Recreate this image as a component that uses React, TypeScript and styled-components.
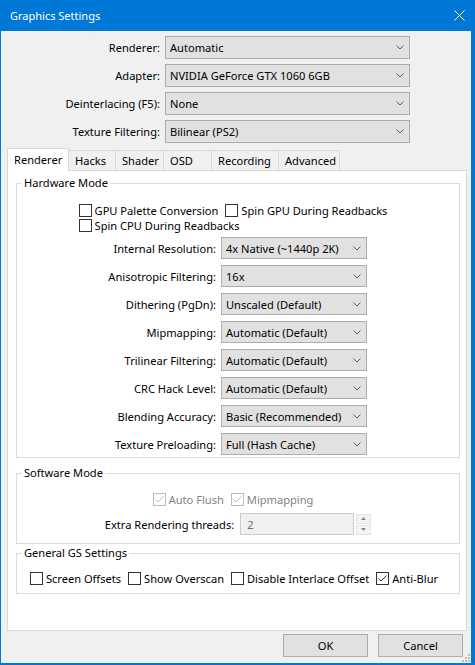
import React from 'react';
import styled, { createGlobalStyle } from 'styled-components';

const GlobalStyle = createGlobalStyle`
  html, body {
    margin: 0;
    padding: 0;
    background: #ffffff;
  }
  body {
    font-family: 'Noto Sans', 'Open Sans', sans-serif;
    font-size: 11.1px;
    color: #000;
  }
`;

const Window = styled.div`
  width: 475px;
  height: 665px;
  box-sizing: border-box;
  background: #0078d7;
  padding: 0 4px 2px 1px;
  display: flex;
  flex-direction: column;
`;

const TitleBar = styled.div`
  height: 31px;
  flex: none;
  display: flex;
  align-items: center;
  justify-content: space-between;
  padding: 0 6px 0 9px;
  color: #fff;
  font-size: 11px;
`;

const Client = styled.div`
  flex: 1;
  position: relative;
  background: #f0f0f0;
  display: flex;
  flex-direction: column;
`;

const FormGrid = styled.div<{ $label: number; $field: number; $gap: number; $row: number }>`
  display: grid;
  grid-template-columns: ${(p) => p.$label}px ${(p) => p.$field}px;
  grid-auto-rows: ${(p) => p.$row}px;
  column-gap: 5px;
  row-gap: ${(p) => p.$gap}px;
`;

const TopForm = styled(FormGrid)`
  padding-top: 5px;
`;

const HardwareForm = styled(FormGrid)`
  align-self: flex-start;
`;

const Label = styled.span`
  text-align: right;
  align-self: center;
  white-space: nowrap;
`;

const Select = styled.div`
  display: flex;
  align-items: center;
  justify-content: space-between;
  box-sizing: border-box;
  border: 1px solid #adadad;
  background: #e1e1e1;
  padding: 0 5px 0 4px;
  white-space: nowrap;
`;

const TabBar = styled.div`
  display: flex;
  align-items: flex-end;
  height: 22px;
  margin: 5px 0 0 6px;
`;

const Tab = styled.div<{ $width: number; $active?: boolean }>`
  box-sizing: border-box;
  width: ${(p) => p.$width}px;
  height: ${(p) => (p.$active ? 23 : 20)}px;
  margin-left: -1px;
  margin-bottom: ${(p) => (p.$active ? -1 : 0)}px;
  padding: 0 0 ${(p) => (p.$active ? 2 : 0)}px 6px;
  border: 1px solid #d9d9d9;
  border-bottom: none;
  background: ${(p) => (p.$active ? '#ffffff' : '#f0f0f0')};
  position: relative;
  z-index: ${(p) => (p.$active ? 1 : 0)};
  display: flex;
  align-items: center;
  white-space: nowrap;

  &:first-child {
    margin-left: 0;
  }
`;

const Panel = styled.div`
  flex: 1;
  width: 460px;
  box-sizing: border-box;
  margin-left: 6px;
  background: #fff;
  border: 1px solid #d9d9d9;
  padding: 4px 6px 0 8px;
  display: flex;
  flex-direction: column;
`;

const Group = styled.fieldset<{ $top?: number }>`
  margin: ${(p) => p.$top ?? 0}px 0 0 0;
  padding: 0;
  min-width: 0;
  border: 1px solid #dcdcdc;
`;

const Legend = styled.legend`
  margin-left: 5px;
  padding: 0 2px;
  line-height: 16px;
`;

const GroupBody = styled.div<{ $pt: number; $pb: number }>`
  padding: ${(p) => p.$pt}px 0 ${(p) => p.$pb}px;
  display: flex;
  flex-direction: column;
  align-items: center;
`;

const CheckStack = styled.div`
  display: flex;
  flex-direction: column;
  align-items: flex-start;
  margin: 0 10px 4px 0;
`;

const CheckRow = styled.div<{ $gap: number; $shift?: number }>`
  display: flex;
  height: 15px;
  gap: ${(p) => p.$gap}px;
  margin-right: ${(p) => p.$shift ?? 0}px;
`;

const CheckItem = styled.label<{ $disabled?: boolean }>`
  display: flex;
  align-items: center;
  gap: 3px;
  white-space: nowrap;
  color: ${(p) => (p.$disabled ? '#838383' : '#000')};
`;

const Box = styled.span<{ $disabled?: boolean }>`
  width: 13px;
  height: 13px;
  box-sizing: border-box;
  border: 1px solid ${(p) => (p.$disabled ? '#bcbcbc' : '#333333')};
  background: #fff;
  display: flex;
  flex: none;
`;

const SpinRow = styled.div`
  display: flex;
  align-items: center;
  height: 22px;
  margin-top: 6px;
`;

const SpinInput = styled.div`
  width: 114px;
  height: 22px;
  box-sizing: border-box;
  margin-left: 6px;
  border: 1px solid #cccccc;
  background: #f0f0f0;
  color: #6d6d6d;
  padding-left: 6px;
  display: flex;
  align-items: center;
`;

const SpinButtons = styled.div`
  display: flex;
  flex-direction: column;
  gap: 1px;
  margin-left: 2px;
`;

const SpinButton = styled.div`
  width: 15px;
  height: 10px;
  box-sizing: border-box;
  border: 1px solid #e3e3e3;
  background: #f4f4f4;
  display: flex;
  align-items: center;
  justify-content: center;
`;

const ButtonRow = styled.div`
  display: flex;
  justify-content: flex-end;
  gap: 10px;
  padding: 3px 8px 6px;
`;

const Button = styled.div`
  width: 85px;
  height: 23px;
  box-sizing: border-box;
  border: 1px solid #adadad;
  background: #e1e1e1;
  display: flex;
  align-items: center;
  justify-content: center;
`;

const Grip = styled.svg`
  position: absolute;
  right: 1px;
  bottom: 1px;
`;

const Chevron = () => (
  <svg width="8" height="5" viewBox="0 0 8 5">
    <polyline points="0.5,0.5 4,4 7.5,0.5" fill="none" stroke="#606060" strokeWidth="1" />
  </svg>
);

const Check = ({ color }: { color: string }) => (
  <svg width="11" height="11" viewBox="0 0 11 11">
    <polyline points="1.5,5.5 4,8 9.5,2.5" fill="none" stroke={color} strokeWidth="1" />
  </svg>
);

const CheckBox = ({ text, checked, disabled }: { text: string; checked?: boolean; disabled?: boolean }) => (
  <CheckItem $disabled={disabled}>
    <Box $disabled={disabled}>{checked && <Check color={disabled ? '#bcbcbc' : '#333333'} />}</Box>
    {text}
  </CheckItem>
);

const topRows = [
  ['Renderer:', 'Automatic'],
  ['Adapter:', 'NVIDIA GeForce GTX 1060 6GB'],
  ['Deinterlacing (F5):', 'None'],
  ['Texture Filtering:', 'Bilinear (PS2)'],
];

const hwRows = [
  ['Internal Resolution:', '4x Native (~1440p 2K)'],
  ['Anisotropic Filtering:', '16x'],
  ['Dithering (PgDn):', 'Unscaled (Default)'],
  ['Mipmapping:', 'Automatic (Default)'],
  ['Trilinear Filtering:', 'Automatic (Default)'],
  ['CRC Hack Level:', 'Automatic (Default)'],
  ['Blending Accuracy:', 'Basic (Recommended)'],
  ['Texture Preloading:', 'Full (Hash Cache)'],
];

const tabs: [string, number][] = [
  ['Renderer', 62],
  ['Hacks', 48],
  ['Shader', 49],
  ['OSD', 49],
  ['Recording', 68],
  ['Advanced', 62],
];

const App = () => {
  return (
    <Window>
      <GlobalStyle />
      <TitleBar>
        <span>Graphics Settings</span>
        <svg width="11" height="11" viewBox="0 0 11 11">
          <path d="M0.5 0.5 L10.5 10.5 M10.5 0.5 L0.5 10.5" stroke="#fff" strokeWidth="1" />
        </svg>
      </TitleBar>
      <Client>
        <TopForm $label={159} $field={245} $gap={5} $row={23}>
          {topRows.map(([label, value]) => (
            <React.Fragment key={label}>
              <Label>{label}</Label>
              <Select>
                {value}
                <Chevron />
              </Select>
            </React.Fragment>
          ))}
        </TopForm>

        <TabBar>
          {tabs.map(([name, width], i) => (
            <Tab key={name} $width={width} $active={i === 0}>
              {name}
            </Tab>
          ))}
        </TabBar>

        <Panel>
          <Group>
            <Legend>Hardware Mode</Legend>
            <GroupBody $pt={12} $pb={2}>
              <CheckStack>
                <CheckRow $gap={7}>
                  <CheckBox text="GPU Palette Conversion" />
                  <CheckBox text="Spin GPU During Readbacks" />
                </CheckRow>
                <CheckRow $gap={7}>
                  <CheckBox text="Spin CPU During Readbacks" />
                </CheckRow>
              </CheckStack>
              <HardwareForm $label={199} $field={146} $gap={6} $row={22}>
                {hwRows.map(([label, value]) => (
                  <React.Fragment key={label}>
                    <Label>{label}</Label>
                    <Select>
                      {value}
                      <Chevron />
                    </Select>
                  </React.Fragment>
                ))}
              </HardwareForm>
            </GroupBody>
          </Group>

          <Group $top={7}>
            <Legend>Software Mode</Legend>
            <GroupBody $pt={11} $pb={8}>
              <CheckRow $gap={7} $shift={10}>
                <CheckBox text="Auto Flush" checked disabled />
                <CheckBox text="Mipmapping" checked disabled />
              </CheckRow>
              <SpinRow>
                <span>Extra Rendering threads:</span>
                <SpinInput>2</SpinInput>
                <SpinButtons>
                  <SpinButton>
                    <svg width="5" height="3" viewBox="0 0 5 3">
                      <path d="M0 3 L2.5 0 L5 3 Z" fill="#8a8a8a" />
                    </svg>
                  </SpinButton>
                  <SpinButton>
                    <svg width="5" height="3" viewBox="0 0 5 3">
                      <path d="M0 0 L2.5 3 L5 0 Z" fill="#8a8a8a" />
                    </svg>
                  </SpinButton>
                </SpinButtons>
              </SpinRow>
            </GroupBody>
          </Group>

          <Group $top={1}>
            <Legend>General GS Settings</Legend>
            <GroupBody $pt={10} $pb={7}>
              <CheckRow $gap={7} $shift={8}>
                <CheckBox text="Screen Offsets" />
                <CheckBox text="Show Overscan" />
                <CheckBox text="Disable Interlace Offset" />
                <CheckBox text="Anti-Blur" checked />
              </CheckRow>
            </GroupBody>
          </Group>
        </Panel>

        <ButtonRow>
          <Button>OK</Button>
          <Button>Cancel</Button>
        </ButtonRow>

        <Grip width="8" height="8" viewBox="0 0 8 8">
          <rect x="6" y="0" width="2" height="2" fill="#bdbdbd" />
          <rect x="3" y="3" width="2" height="2" fill="#bdbdbd" />
          <rect x="6" y="3" width="2" height="2" fill="#bdbdbd" />
          <rect x="0" y="6" width="2" height="2" fill="#bdbdbd" />
          <rect x="3" y="6" width="2" height="2" fill="#bdbdbd" />
          <rect x="6" y="6" width="2" height="2" fill="#bdbdbd" />
        </Grip>
      </Client>
    </Window>
  );
};

export default App;
